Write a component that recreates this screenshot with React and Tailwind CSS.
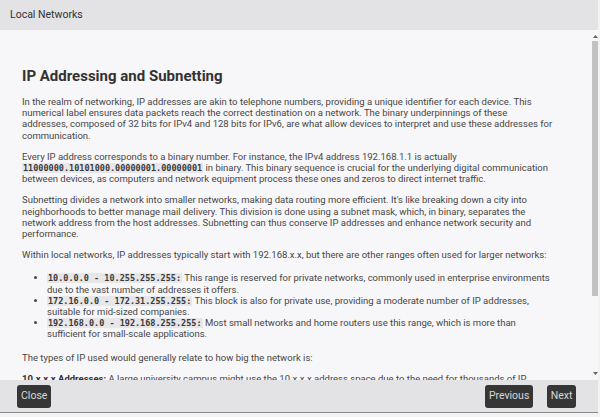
export default function App() {
  const code = "font-['DejaVu_Sans_Mono',monospace] font-bold text-[8.5px] leading-[10px] bg-[#e7e6e8] text-[#3a3a3a] px-[1px]";
  return (
    <div className="w-[600px] h-[417px] bg-[#f3f3f3] font-['Roboto',sans-serif]">
      <div className="w-[598px] h-[413px] flex flex-col border-b border-[#8a8a8a]">
        <div className="h-[30px] shrink-0 bg-[#e3e2e4] flex items-center pl-[10px] text-[10.5px] text-[#333]">
          Local Networks
        </div>
        <div className="flex-1 min-h-0 flex bg-[#f7f6f8]">
          <div className="flex-1 min-w-0 overflow-hidden pl-[22px] pr-[29px] pt-[35px] text-[9.5px] leading-[11.2px] text-[#474747]">
            <h1 className="text-[15px] leading-[22px] font-bold text-[#333] mb-[9px]">IP Addressing and Subnetting</h1>
            <p className="mb-[10px]">
              In the realm of networking, IP addresses are akin to telephone numbers, providing a unique identifier for each device. This numerical label ensures data packets reach the correct destination on a network. The binary underpinnings of these addresses, composed of 32 bits for IPv4 and 128 bits for IPv6, are what allow devices to interpret and use these addresses for communication.
            </p>
            <p className="mb-[10px]">
              Every IP address corresponds to a binary number. For instance, the IPv4 address 192.168.1.1 is actually <span className={code}>11000000.10101000.00000001.00000001</span> in binary. This binary sequence is crucial for the underlying digital communication between devices, as computers and network equipment process these ones and zeros to direct internet traffic.
            </p>
            <p className="mb-[10px]">
              Subnetting divides a network into smaller networks, making data routing more efficient. It's like breaking down a city into neighborhoods to better manage mail delivery. This division is done using a subnet mask, which, in binary, separates the network address from the host addresses. Subnetting can thus conserve IP addresses and enhance network security and performance.
            </p>
            <p className="mb-[12px]">
              Within local networks, IP addresses typically start with 192.168.x.x, but there are other ranges often used for larger networks:
            </p>
            <ul className="list-disc pl-[25px] mb-[12px]">
              <li><span className={code}>10.0.0.0 - 10.255.255.255:</span> This range is reserved for private networks, commonly used in enterprise environments due to the vast number of addresses it offers.</li>
              <li><span className={code}>172.16.0.0 - 172.31.255.255:</span> This block is also for private use, providing a moderate number of IP addresses, suitable for mid-sized companies.</li>
              <li><span className={code}>192.168.0.0 - 192.168.255.255:</span> Most small networks and home routers use this range, which is more than sufficient for small-scale applications.</li>
            </ul>
            <p className="mb-[10px]">The types of IP used would generally relate to how big the network is:</p>
            <p>
              <span className="font-bold text-[#333]">10.x.x.x Addresses:</span> A large university campus might use the 10.x.x.x address space due to the need for thousands of IP addresses for students, faculty and devices.
            </p>
          </div>
          <div className="w-[14px] shrink-0 flex flex-col items-end pt-[2px] pb-[3px]">
            <div className="w-[6px] h-[8px] flex items-center justify-center">
              <svg width="5" height="3" viewBox="0 0 5 3"><path d="M0 3 L2.5 0 L5 3 Z" fill="#666" /></svg>
            </div>
            <div className="w-[6px] h-[255px] bg-[#c2c1c3] mt-[1px]"></div>
            <div className="flex-1"></div>
            <div className="w-[6px] h-[8px] flex items-center justify-center">
              <svg width="5" height="3" viewBox="0 0 5 3"><path d="M0 0 L5 0 L2.5 3 Z" fill="#666" /></svg>
            </div>
          </div>
        </div>
        <div className="h-[32px] shrink-0 bg-[#e3e2e4] flex items-center justify-between pl-[17px] pr-[22px]">
          <button className="h-[23px] px-[4px] rounded-[3px] bg-[#363636] text-[#d8d8d8] text-[10.5px] leading-none">Close</button>
          <div className="flex gap-[14px]">
            <button className="h-[23px] px-[4px] rounded-[3px] bg-[#363636] text-[#d8d8d8] text-[10.5px] leading-none">Previous</button>
            <button className="h-[23px] px-[3.5px] rounded-[3px] bg-[#363636] text-[#d8d8d8] text-[10.5px] leading-none">Next</button>
          </div>
        </div>
      </div>
    </div>
  );
}
